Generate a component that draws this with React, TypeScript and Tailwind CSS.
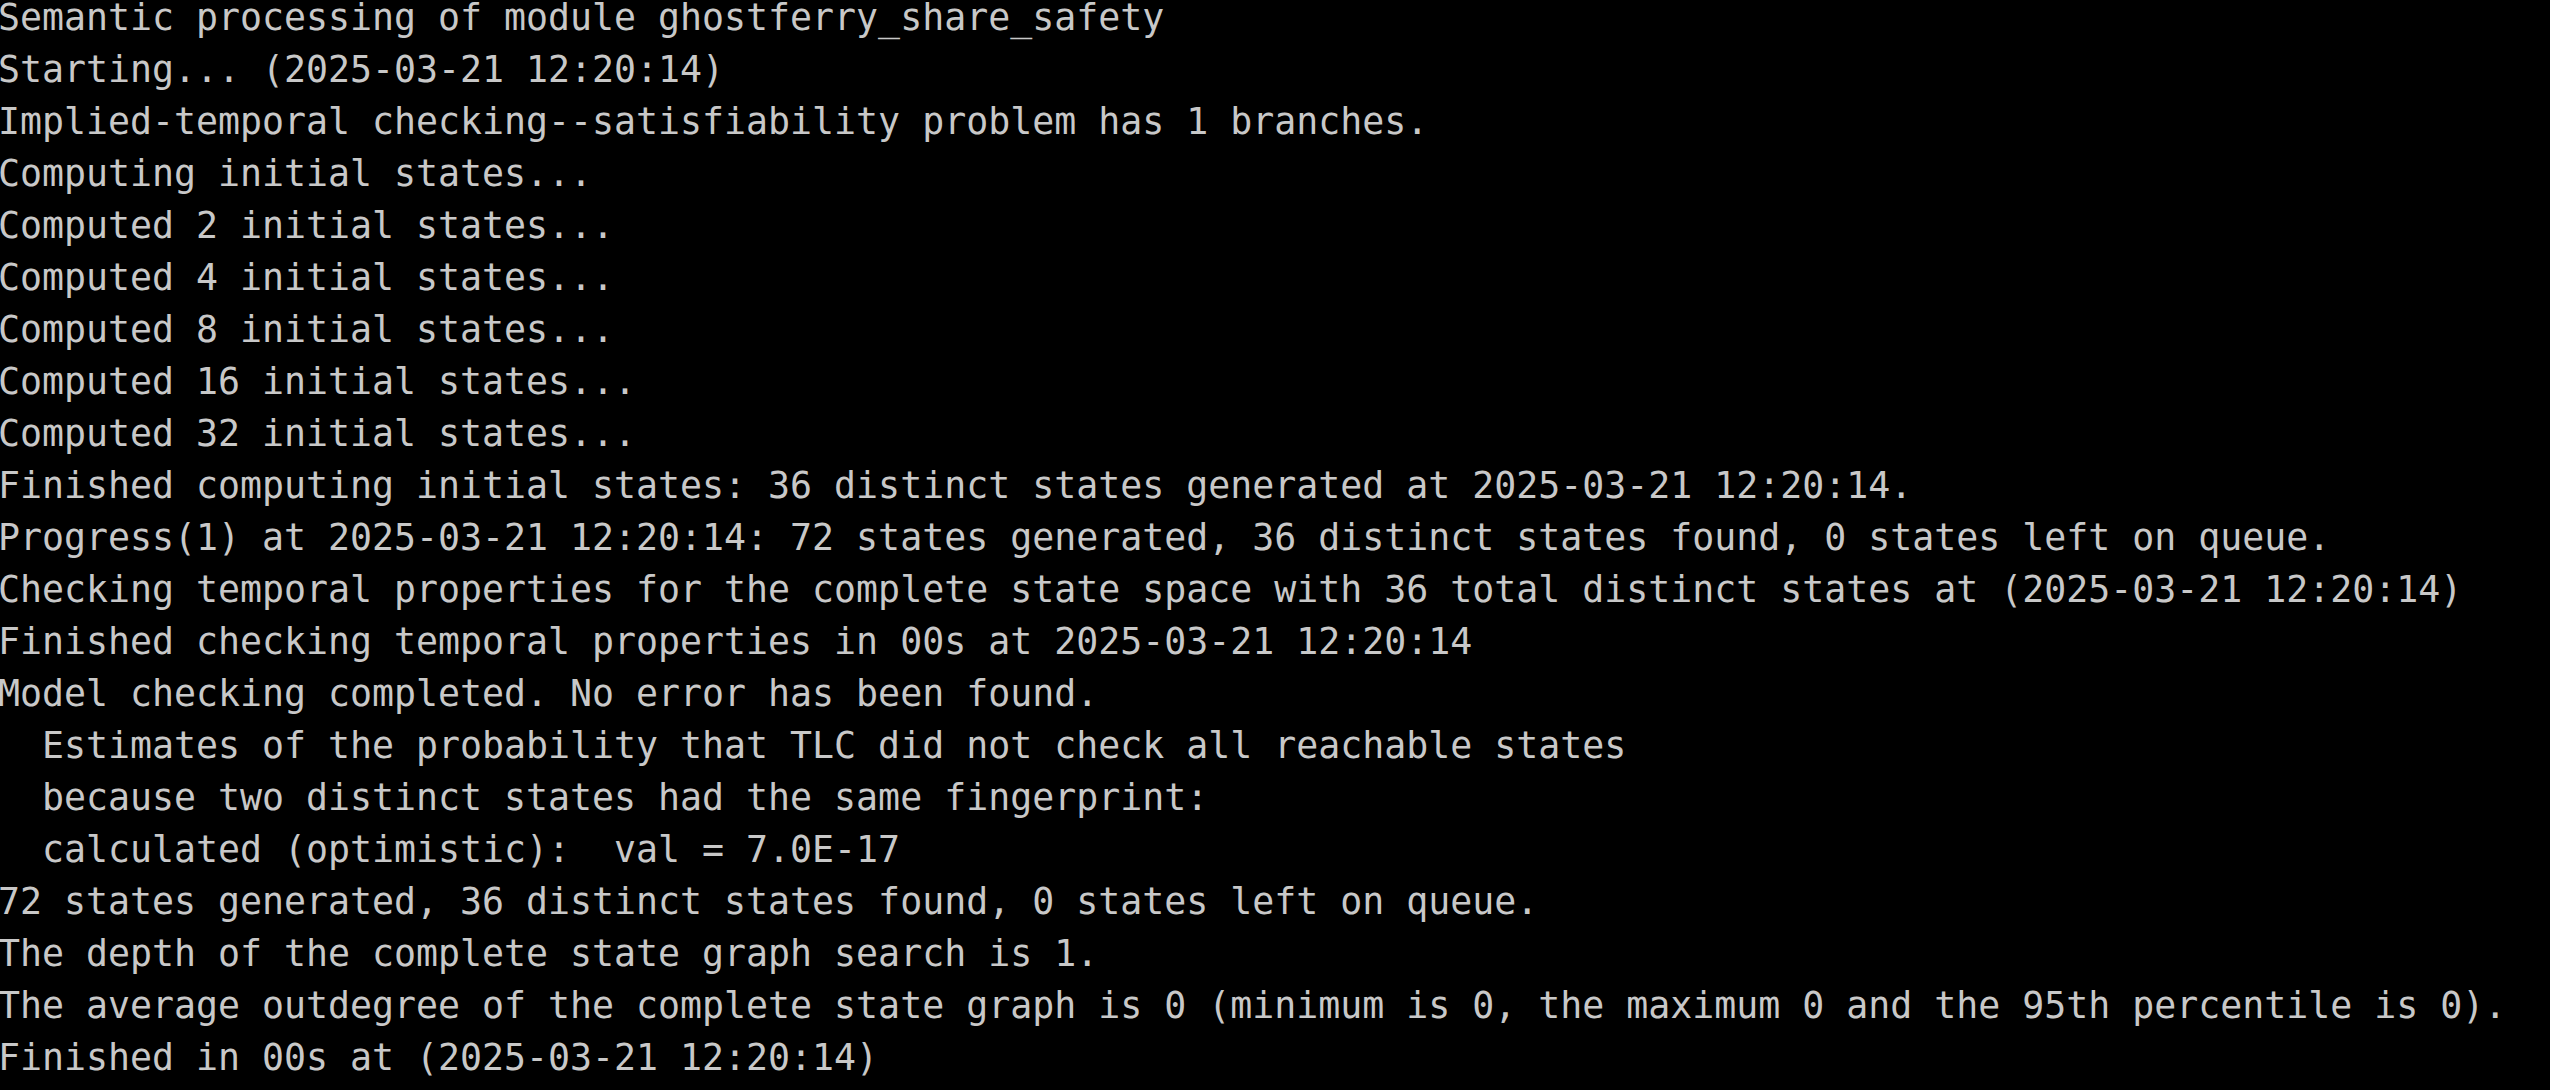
const lines = [
  'Semantic processing of module ghostferry_share_safety',
  'Starting... (2025-03-21 12:20:14)',
  'Implied-temporal checking--satisfiability problem has 1 branches.',
  'Computing initial states...',
  'Computed 2 initial states...',
  'Computed 4 initial states...',
  'Computed 8 initial states...',
  'Computed 16 initial states...',
  'Computed 32 initial states...',
  'Finished computing initial states: 36 distinct states generated at 2025-03-21 12:20:14.',
  'Progress(1) at 2025-03-21 12:20:14: 72 states generated, 36 distinct states found, 0 states left on queue.',
  'Checking temporal properties for the complete state space with 36 total distinct states at (2025-03-21 12:20:14)',
  'Finished checking temporal properties in 00s at 2025-03-21 12:20:14',
  'Model checking completed. No error has been found.',
  '  Estimates of the probability that TLC did not check all reachable states',
  '  because two distinct states had the same fingerprint:',
  '  calculated (optimistic):  val = 7.0E-17',
  '72 states generated, 36 distinct states found, 0 states left on queue.',
  'The depth of the complete state graph search is 1.',
  'The average outdegree of the complete state graph is 0 (minimum is 0, the maximum 0 and the 95th percentile is 0).',
  'Finished in 00s at (2025-03-21 12:20:14)',
]

export default function App() {
  return (
    <div className="h-[1090px] w-[2550px] overflow-hidden bg-black">
      <div className="-mt-2 -ml-[2px] font-['DejaVu_Sans_Mono',monospace] text-[36.55px] leading-[52px] text-[#c8c8c8] whitespace-pre">
        {lines.map((line, i) => (
          <div key={i}>{line}</div>
        ))}
      </div>
    </div>
  )
}
